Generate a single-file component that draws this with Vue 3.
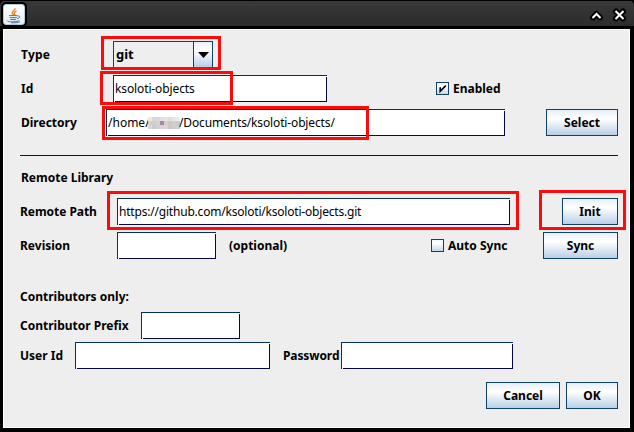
<script setup>
import { ref } from 'vue'

const directoryTail = '/Documents/ksoloti-objects/'
const enabled = ref(true)
const autoSync = ref(false)
const blocks = [
  '#eee9e6', '#ddd5d3', '#dad6da', '#e0e0e4', '#e9e2dd', '#e2dde0', '#e8e6e4', '#eeeeee',
  '#d6cfc9', '#c9cfd0', '#d8d0c8', '#a58aa6', '#d3d0da', '#d0c8c4', '#d8cdc8', '#c4ccd8',
  '#ddd8d4', '#cdc8cf', '#ccd4d1', '#dccfd6', '#dcd3ca', '#cbc7cc', '#c7d0d8', '#d0ccda',
]
</script>

<template>
  <div class="window">
    <header class="titlebar">
      <span class="app-icon">
        <svg width="20" height="20" viewBox="0 0 20 20" fill="none">
          <path d="M11 3C12 5 7 6.2 8.2 8.5L10 10.2M12.5 6C9.5 7.3 9.7 8.2 11 10" stroke="#ee8b22" stroke-width="1.4" />
          <path d="M5 10.6h8.5M5.6 12.7h7.2M6.3 14.6h5.8M13.5 11.2c3-1 3 2-.3 2.4M3.7 15.6c-1.6 1.4 9 1.6 11.6 0M7 17.7c4 .3 7 0 9-1" stroke="#4a7896" stroke-width="1" />
        </svg>
      </span>
      <svg class="title-buttons" width="42" height="16" viewBox="0 0 42 16" fill="none">
        <g stroke="#000" stroke-width="6" stroke-linejoin="round" stroke-linecap="round">
          <path d="M5 10.5l3.5-3.5L12 10.5M28 4.5l7 7M35 4.5l-7 7" />
        </g>
        <path d="M4.5 11l4-4 4 4M27.5 4l8 8M35.5 4l-8 8" stroke="#fff" stroke-width="2" />
      </svg>
    </header>

    <main class="form">
      <div class="row type">
        <label class="w92 upper"><b class="t-type">Type</b></label>
        <div class="combo"><span><b class="t-git">git</b></span><i><svg width="11" height="6" viewBox="0 0 11 6"><path d="M0 0h11L5.5 6z" fill="#000" /></svg></i></div>
      </div>
      <div class="row id">
        <label class="w92 upper"><b>Id</b></label>
        <div class="field id-field"><span class="t-id">ksoloti-objects</span></div>
        <div class="check enabled"><span class="box"><svg v-if="enabled" width="11" height="11" viewBox="0 0 11 11" fill="none"><path d="M3.2 4.2v4L8.8 2.6" stroke="#000" stroke-width="1.6" /></svg></span><b>Enabled</b></div>
      </div>
      <div class="row directory">
        <label class="w85 upper"><b>Directory</b></label>
        <div class="field dir-field">
          <span class="home">/home/</span>
          <span class="pixels"><i v-for="(c, n) in blocks" :key="n" :style="{ background: c }"></i></span>
          <span class="tail">{{ directoryTail }}</span>
        </div>
        <button class="select"><b>Select</b></button>
      </div>
      <div class="separator"></div>
      <div class="heading library"><b>Remote Library</b></div>
      <div class="row path">
        <label class="w96"><b class="t-path-label">Remote Path</b></label>
        <div class="field path-field"><span class="t-path">https://github.com/ksoloti/ksoloti-objects.git</span></div>
        <button class="init"><b>Init</b></button>
      </div>
      <div class="row revision">
        <label class="w96"><b>Revision</b></label>
        <div class="field short"></div>
        <b class="optional">(optional)</b>
        <div class="check auto"><span class="box"><svg v-if="autoSync" width="11" height="11" viewBox="0 0 11 11" fill="none"><path d="M3.2 4.2v4L8.8 2.6" stroke="#000" stroke-width="1.6" /></svg></span><b>Auto Sync</b></div>
        <button class="sync"><b>Sync</b></button>
      </div>
      <div class="heading contributors"><b>Contributors only:</b></div>
      <div class="row prefix">
        <label class="w120"><b>Contributor Prefix</b></label>
        <div class="field short"></div>
      </div>
      <div class="row user">
        <label class="w54"><b>User Id</b></label>
        <div class="field user-field"></div>
        <label class="password"><b>Password</b></label>
        <div class="field pass-field"></div>
      </div>
      <div class="row actions">
        <button class="cancel"><b>Cancel</b></button>
        <button class="ok"><b>OK</b></button>
      </div>
    </main>

    <div class="mark mark-type"></div>
    <div class="mark mark-id"></div>
    <div class="mark mark-dir"></div>
    <div class="mark mark-path"></div>
    <div class="mark mark-init"></div>
  </div>
</template>

<style>
body { background: #000; overflow: hidden; }
</style>

<style scoped>
* { box-sizing: border-box; }
.window { position: relative; width: 634px; height: 432px; background: #000; overflow: hidden; font: 12px/16px "Noto Sans", sans-serif; color: #000; }
.titlebar { height: 29px; display: flex; justify-content: space-between; align-items: flex-start; padding: 4px 4px 0 3px; background: linear-gradient(#000 0 1px, #393939 1px, #2b2b2b 26px, #000 26px); border-radius: 6px 6px 0 0; }
.app-icon { width: 22px; height: 21px; padding: 0 1px; border-radius: 3px; background: linear-gradient(#fff, #e5edf3); border: 1px solid #b6cddd; box-shadow: 0 0 0 2px #000; display: flex; align-items: center; justify-content: center; }
.app-icon svg { flex: none; }
.title-buttons { margin-top: 3px; }
.form { width: 627px; height: 399px; margin-left: 3px; padding: 12px 12px 0 17px; background: #eee; box-shadow: inset 0 0 0 1px #fff; display: flex; flex-direction: column; }
.row { flex: none; height: 27px; display: flex; align-items: center; }
b { white-space: nowrap; font-weight: 700; }
label { flex: none; }
.upper { padding-left: 1px; }
.w92 { width: 93px; }
.w85 { width: 86px; }
.w96 { width: 97px; }
.w120 { width: 121px; }
.w54 { width: 55px; }
.t-type { letter-spacing: .25px; }
.t-path-label { letter-spacing: -.05px; }
.t-id { letter-spacing: -.12px; }
.t-path { letter-spacing: -.2px; }
.tail { letter-spacing: -.14px; margin-left: -1px; }
.combo { width: 100px; height: 27px; display: flex; border: 1px solid #0d4368; }
.combo span { flex: 1; padding: 4px 0 0 2px; }
.combo b { font-size: 13px; }
.combo i { width: 19px; border-left: 1px solid #0d4368; background: linear-gradient(#e8f0f8, #fff 35%, #b8cfe5); display: flex; align-items: center; justify-content: center; }
.field { position: relative; flex: none; height: 27px; border: 1px solid #06305c; border-right-color: #06064f; border-bottom-color: #06064f; background: #fff; display: flex; align-items: center; padding-left: 1px; white-space: nowrap; }
.field::before, .field::after { content: ""; position: absolute; width: 1px; height: 1px; background: #fff; }
.field::before { right: -1px; top: 0; }
.field::after { left: 0; bottom: -1px; }
.id, .directory { margin-top: 7px; }
.id-field { width: 214px; }
.dir-field { width: 399px; }
.path-field { width: 393px; }
.short { width: 99px; }
.user-field { width: 195px; }
.pass-field { width: 172px; }
.check { display: flex; align-items: center; gap: 4px; }
.box { width: 13px; height: 13px; border: 1px solid #0d4368; background: linear-gradient(#f2f7fb, #fff 30%, #c3d7ea); display: flex; }
.enabled { margin-left: 109px; }
.home { width: 40px; }
.pixels { width: 32px; height: 12px; display: grid; grid-template-columns: repeat(8, 4px); grid-template-rows: repeat(3, 4px); }
button { flex: none; height: 27px; padding: 0; border: 1px solid #0d4368; background: linear-gradient(#e6eff8, #fff 35%, #b8cfe5); font: inherit; color: #000; }
.select { width: 72px; margin-left: auto; }
.separator { flex: none; height: 1px; width: 598px; margin-top: 19px; background: #0a0a75; }
.heading { flex: none; height: 16px; }
.library { margin-top: 14px; padding-left: 1px; }
.path { margin-top: 12px; }
.init { width: 56px; margin-left: auto; }
.revision { margin-top: 7px; }
.optional { width: 202px; margin-left: 13px; }
.sync { width: 75px; margin-left: auto; }
.contributors { margin-top: 30px; }
.prefix { margin-top: 7px; }
.user { margin-top: 3px; }
.password { width: 58px; margin-left: 13px; letter-spacing: -.1px; }
.actions { margin-top: 13px; justify-content: flex-end; gap: 6px; }
.cancel { width: 74px; }
.ok { width: 52px; }
.mark { position: absolute; border: 3px solid #ff0a0a; pointer-events: none; }
.mark-type { left: 101px; top: 36px; width: 120px; height: 34px; }
.mark-id { left: 100px; top: 71px; width: 133px; height: 34px; }
.mark-dir { left: 102px; top: 106px; width: 267px; height: 34px; }
.mark-path { left: 107px; top: 191px; width: 412px; height: 39px; }
.mark-init { left: 539px; top: 190px; width: 87px; height: 40px; }
</style>
